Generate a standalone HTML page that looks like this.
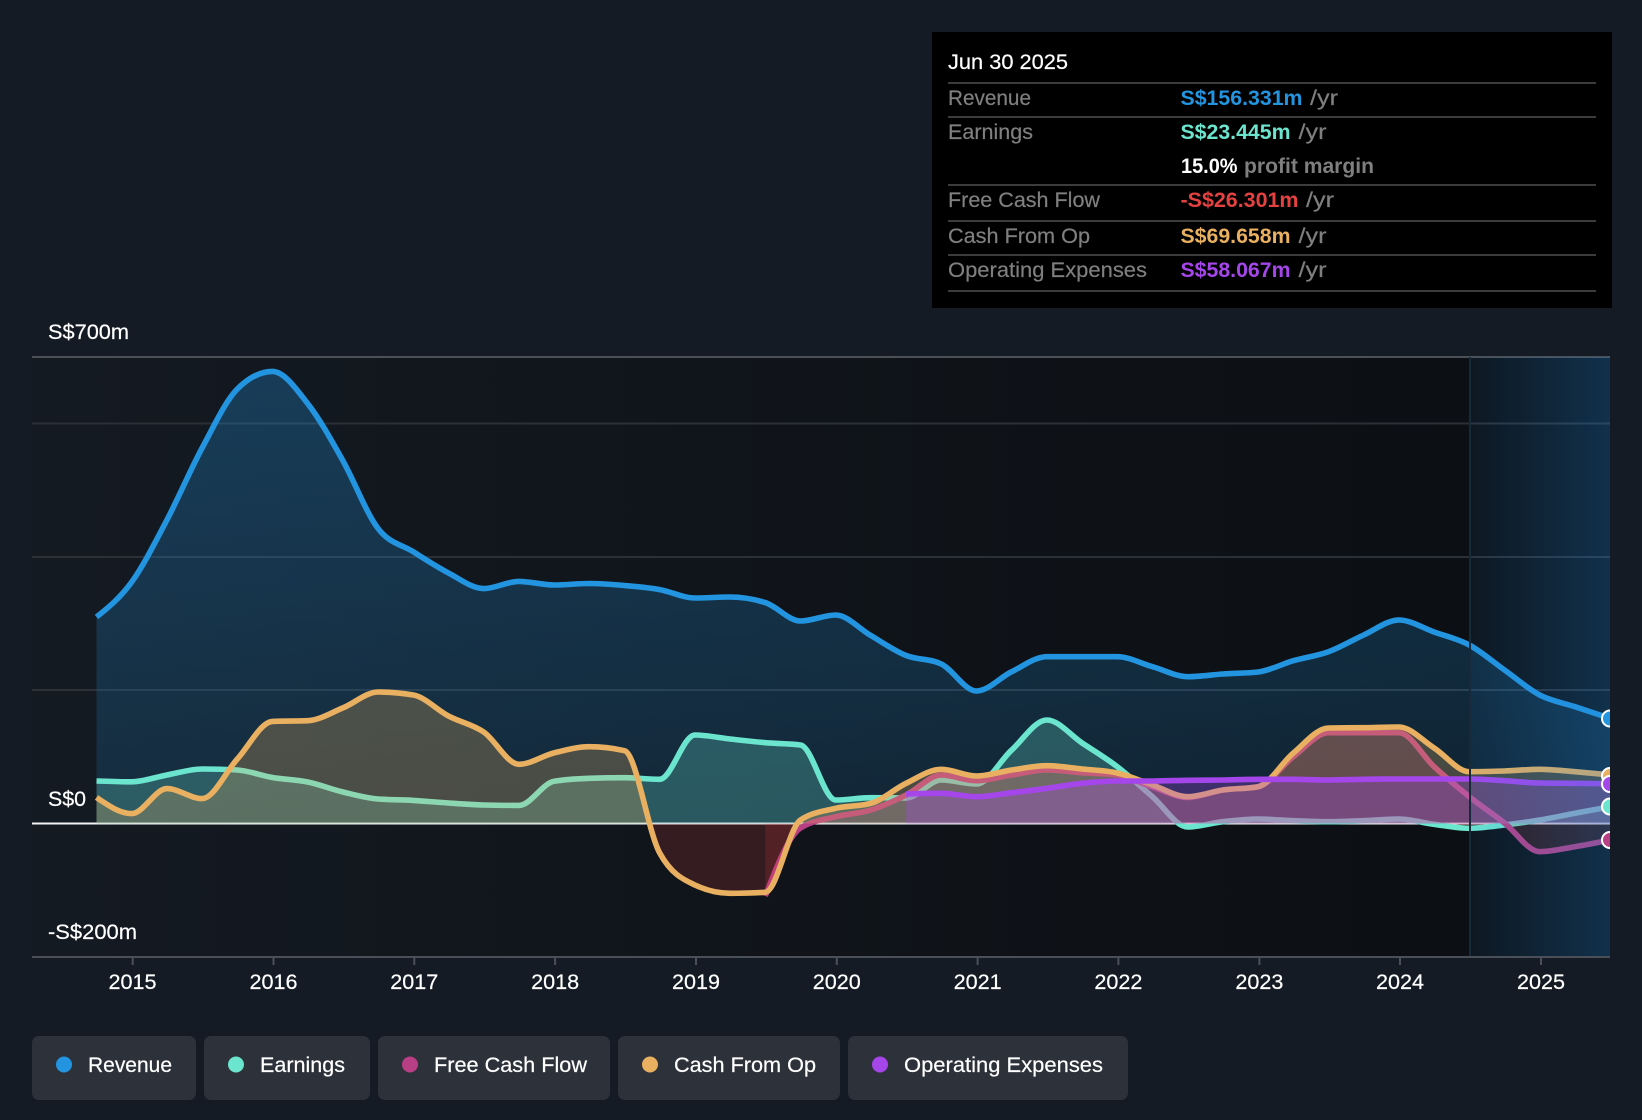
<!DOCTYPE html>
<html>
<head>
<meta charset="utf-8">
<style>
html,body{margin:0;padding:0;background:#151b24;width:1642px;height:1120px;overflow:hidden}
svg{display:block}
text{font-family:"Liberation Sans",Arial,sans-serif;font-size:21.5px;fill:#fff;stroke:#fff;stroke-width:.2px}
.g{fill:#7f7f7f;stroke:#7f7f7f}
.b{font-weight:bold;stroke:none}
.g.b{stroke:none}
</style>
</head>
<body>
<svg xmlns="http://www.w3.org/2000/svg" width="1642" height="1120" viewBox="0 0 1642 1120">
<defs>
<linearGradient id="bg" x1="32" x2="1470" y1="0" y2="0" gradientUnits="userSpaceOnUse">
<stop offset="0" stop-color="#141a22"/><stop offset="1" stop-color="#0c0f13"/>
</linearGradient>
<linearGradient id="ov" x1="1470" x2="1610" y1="0" y2="0" gradientUnits="userSpaceOnUse">
<stop offset="0" stop-color="#1e8be3" stop-opacity=".07"/><stop offset="1" stop-color="#1e8be3" stop-opacity=".27"/>
</linearGradient>
<linearGradient id="rev" x1="0" x2="0" y1="357" y2="823" gradientUnits="userSpaceOnUse">
<stop offset="0" stop-color="#2394df" stop-opacity=".3"/><stop offset="1" stop-color="#2394df" stop-opacity=".15"/>
</linearGradient>
<clipPath id="up"><rect x="32" y="357" width="1578" height="466.5"/></clipPath>
<clipPath id="dn"><rect x="32" y="823.5" width="1578" height="134"/></clipPath>
<clipPath id="plot"><rect x="32" y="340" width="1578" height="617"/></clipPath>
</defs>

<rect width="1642" height="1120" fill="#151b24"/>
<rect x="32" y="357" width="1578" height="600" fill="url(#bg)"/>

<g stroke-width="2">
<line x1="32" x2="1610" y1="357" y2="357" stroke="#4b4f56"/>
<line x1="32" x2="1610" y1="423.5" y2="423.5" stroke="#2b2f36"/>
<line x1="32" x2="1610" y1="557" y2="557" stroke="#2b2f36"/>
<line x1="32" x2="1610" y1="690" y2="690" stroke="#2b2f36"/>
<line x1="32" x2="1610" y1="823.5" y2="823.5" stroke="#f2f2f2"/>
<line x1="32" x2="1610" y1="957" y2="957" stroke="#4b4f58"/>
</g>

<g id="series" clip-path="url(#plot)"></g>

<rect x="1470" y="357" width="140" height="599" fill="url(#ov)"/>
<line x1="1470" x2="1470" y1="357" y2="956" stroke="#172a3a" stroke-width="2"/>

<g clip-path="url(#plot)" stroke="#fff" stroke-width="2">
<circle cx="1610" cy="718.5" r="8" fill="#2394df"/>
<circle cx="1610" cy="776" r="8" fill="#e8b060"/>
<circle cx="1610" cy="806.5" r="8" fill="#6ce5cf"/>
<circle cx="1610" cy="840" r="8" fill="#b83f84"/>
<circle cx="1610" cy="784" r="8" fill="#a546eb"/>
</g>

<g stroke="#4b4f58" stroke-width="2">
<line x1="132.7" x2="132.7" y1="957" y2="965"/>
<line x1="273.5" x2="273.5" y1="957" y2="965"/>
<line x1="414.3" x2="414.3" y1="957" y2="965"/>
<line x1="555.1" x2="555.1" y1="957" y2="965"/>
<line x1="696" x2="696" y1="957" y2="965"/>
<line x1="836.8" x2="836.8" y1="957" y2="965"/>
<line x1="977.6" x2="977.6" y1="957" y2="965"/>
<line x1="1118.4" x2="1118.4" y1="957" y2="965"/>
<line x1="1259.4" x2="1259.4" y1="957" y2="965"/>
<line x1="1400" x2="1400" y1="957" y2="965"/>
<line x1="1541" x2="1541" y1="957" y2="965"/>
</g>

<text x="48" y="339" textLength="81" lengthAdjust="spacingAndGlyphs">S$700m</text>
<text x="48" y="806" textLength="38" lengthAdjust="spacingAndGlyphs">S$0</text>
<text x="48" y="939" textLength="89" lengthAdjust="spacingAndGlyphs">-S$200m</text>

<g>
<text x="108.5" y="989" textLength="48" lengthAdjust="spacingAndGlyphs">2015</text>
<text x="249.5" y="989" textLength="48" lengthAdjust="spacingAndGlyphs">2016</text>
<text x="390.3" y="989" textLength="48" lengthAdjust="spacingAndGlyphs">2017</text>
<text x="531.1" y="989" textLength="48" lengthAdjust="spacingAndGlyphs">2018</text>
<text x="672" y="989" textLength="48" lengthAdjust="spacingAndGlyphs">2019</text>
<text x="812.8" y="989" textLength="48" lengthAdjust="spacingAndGlyphs">2020</text>
<text x="953.6" y="989" textLength="48" lengthAdjust="spacingAndGlyphs">2021</text>
<text x="1094.4" y="989" textLength="48" lengthAdjust="spacingAndGlyphs">2022</text>
<text x="1235.4" y="989" textLength="48" lengthAdjust="spacingAndGlyphs">2023</text>
<text x="1376" y="989" textLength="48" lengthAdjust="spacingAndGlyphs">2024</text>
<text x="1517" y="989" textLength="48" lengthAdjust="spacingAndGlyphs">2025</text>
</g>

<!-- tooltip -->
<rect x="932" y="32" width="680" height="276" fill="#000"/>
<g stroke="#3c3c3c" stroke-width="2">
<line x1="948" x2="1596" y1="83" y2="83"/>
<line x1="948" x2="1596" y1="117" y2="117"/>
<line x1="948" x2="1596" y1="185" y2="185"/>
<line x1="948" x2="1596" y1="221" y2="221"/>
<line x1="948" x2="1596" y1="255" y2="255"/>
<line x1="948" x2="1596" y1="291" y2="291"/>
</g>
<text x="948" y="69" textLength="120" lengthAdjust="spacingAndGlyphs">Jun 30 2025</text>
<text class="g" x="948" y="105" textLength="83" lengthAdjust="spacingAndGlyphs">Revenue</text>
<text class="g" x="948" y="139" textLength="85" lengthAdjust="spacingAndGlyphs">Earnings</text>
<text class="g" x="948" y="207" textLength="152" lengthAdjust="spacingAndGlyphs">Free Cash Flow</text>
<text class="g" x="948" y="243" textLength="142" lengthAdjust="spacingAndGlyphs">Cash From Op</text>
<text class="g" x="948" y="277" textLength="199" lengthAdjust="spacingAndGlyphs">Operating Expenses</text>

<text class="b" x="1180.5" y="105" textLength="122" lengthAdjust="spacingAndGlyphs" style="fill:#2394df">S$156.331m</text>
<text class="g" x="1310" y="105" textLength="28" lengthAdjust="spacingAndGlyphs">/yr</text>
<text class="b" x="1180.5" y="139" textLength="110" lengthAdjust="spacingAndGlyphs" style="fill:#6ce5cf">S$23.445m</text>
<text class="g" x="1298.5" y="139" textLength="28" lengthAdjust="spacingAndGlyphs">/yr</text>
<text class="b" x="1181" y="173" textLength="56.5" lengthAdjust="spacingAndGlyphs">15.0%</text>
<text class="g b" x="1244" y="173" textLength="130" lengthAdjust="spacingAndGlyphs">profit margin</text>
<text class="b" x="1180.5" y="207" textLength="118" lengthAdjust="spacingAndGlyphs" style="fill:#e64141">-S$26.301m</text>
<text class="g" x="1306" y="207" textLength="28" lengthAdjust="spacingAndGlyphs">/yr</text>
<text class="b" x="1180.5" y="243" textLength="110" lengthAdjust="spacingAndGlyphs" style="fill:#e8b060">S$69.658m</text>
<text class="g" x="1298.5" y="243" textLength="28" lengthAdjust="spacingAndGlyphs">/yr</text>
<text class="b" x="1180.5" y="277" textLength="110" lengthAdjust="spacingAndGlyphs" style="fill:#a546eb">S$58.067m</text>
<text class="g" x="1298.5" y="277" textLength="28" lengthAdjust="spacingAndGlyphs">/yr</text>

<!-- legend -->
<g fill="#2d313a">
<rect x="32" y="1036" width="164" height="64" rx="7"/>
<rect x="204" y="1036" width="166" height="64" rx="7"/>
<rect x="378" y="1036" width="232" height="64" rx="7"/>
<rect x="618" y="1036" width="222" height="64" rx="7"/>
<rect x="848" y="1036" width="280" height="64" rx="7"/>
</g>
<circle cx="64" cy="1064.5" r="8" fill="#2394df"/>
<circle cx="236" cy="1064.5" r="8" fill="#6ce5cf"/>
<circle cx="410" cy="1064.5" r="8" fill="#b83f84"/>
<circle cx="650" cy="1064.5" r="8" fill="#e8b060"/>
<circle cx="880" cy="1064.5" r="8" fill="#a546eb"/>
<text x="88" y="1072" textLength="84" lengthAdjust="spacingAndGlyphs">Revenue</text>
<text x="260" y="1072" textLength="85" lengthAdjust="spacingAndGlyphs">Earnings</text>
<text x="434" y="1072" textLength="153" lengthAdjust="spacingAndGlyphs">Free Cash Flow</text>
<text x="674" y="1072" textLength="142" lengthAdjust="spacingAndGlyphs">Cash From Op</text>
<text x="904" y="1072" textLength="199" lengthAdjust="spacingAndGlyphs">Operating Expenses</text>
</svg>

<script>
(function(){
var X0=96.5,DX=35.2,Z=823.5,NS="http://www.w3.org/2000/svg";
var rev=[617,582,520,448,389,371.4,403.6,460.7,528.6,551.8,573,588.6,581.4,585,583.5,585.5,589.6,598,597,602.6,621,615,635.6,655.5,664,691,671.7,656.7,656.7,656.7,666.7,676.7,674,672,660.7,651.7,635,620,632,645,670,695,706.7,718.3];
var ear=[781,781.8,775,769,770,777.5,782,792,799,800.4,803,805,805.4,781.3,778.3,777.7,779.3,735,739,742.7,745,800,797.7,798,780,784,750,720,743,766.7,796.7,827,821.7,819,820.7,821.7,820.7,819,824.3,828.3,825,820,813.3,806.7];
var fcf=[896,828,816.7,810,795,775,780.7,775,770,772.7,775,787,797.5,790,786.7,756.7,732.7,732.7,732.7,766.7,796.7,823,851.7,846.7,840];
var op=[797.5,813.6,788.6,798.6,759,721.4,720.7,707.9,692,695,716,732,764.3,752.9,746.7,750.7,853,885,893.3,892.3,820,808.3,803.3,783.3,769.3,776,770,765.7,769,773,785,796.7,790,786.7,753,728,727.7,727,748,771.7,771,769.3,771.7,775];
var pur=[794,793.3,796.7,792.7,788.3,783.3,781,781,780.3,780,779.3,779.3,780,779.3,779,779,779,780.7,783,783.3,783.7];
function sgn(v){return v<0?-1:1;}
function slopes(d){
  var n=d.length,m=new Array(n),i;
  for(i=1;i<n-1;i++){
    var s0=(d[i]-d[i-1])/DX,s1=(d[i+1]-d[i])/DX,p=(s0+s1)/2;
    m[i]=(sgn(s0)+sgn(s1))*Math.min(Math.abs(s0),Math.abs(s1),.5*Math.abs(p))||0;
  }
  m[0]=(3*(d[1]-d[0])/DX-m[1])/2;
  m[n-1]=(3*(d[n-1]-d[n-2])/DX-m[n-2])/2;
  return m;
}
function line(d,s){
  var m=slopes(d),h=DX/3;
  var p="M"+(X0+s*DX).toFixed(1)+" "+d[0];
  for(var i=0;i<d.length-1;i++){
    var x1=X0+(s+i)*DX,x2=x1+DX;
    p+="C"+(x1+h).toFixed(1)+" "+(d[i]+h*m[i]).toFixed(1)+" "+(x2-h).toFixed(1)+" "+(d[i+1]-h*m[i+1]).toFixed(1)+" "+x2.toFixed(1)+" "+d[i+1];
  }
  return p;
}
var g=document.getElementById("series");
function el(d,o){var e=document.createElementNS(NS,"path");e.setAttribute("d",d);for(var k in o)e.setAttribute(k,o[k]);g.appendChild(e);}
function add(d,s,col,fill,op1){
  var l=line(d,s),xa=X0+s*DX,xb=X0+(s+d.length-1)*DX;
  var a=l+"L"+xb.toFixed(1)+" "+Z+"L"+xa.toFixed(1)+" "+Z+"Z";
  el(a,{fill:fill,"fill-opacity":op1,"clip-path":"url(#up)"});
  el(a,{fill:"#e64141","fill-opacity":.17,"clip-path":"url(#dn)"});
  el(l,{fill:"none",stroke:col,"stroke-width":5.6,"stroke-linejoin":"round"});
}
add(rev,0,"#2394df","url(#rev)",1);
add(ear,0,"#6ce5cf","#6ce5cf",.26);
add(fcf,19,"#b83f84","#b83f84",.22);
add(op,0,"#e8b060","#e8b060",.26);
add(pur,23,"#a546eb","#a546eb",.3);
})();
</script>
</body>
</html>
